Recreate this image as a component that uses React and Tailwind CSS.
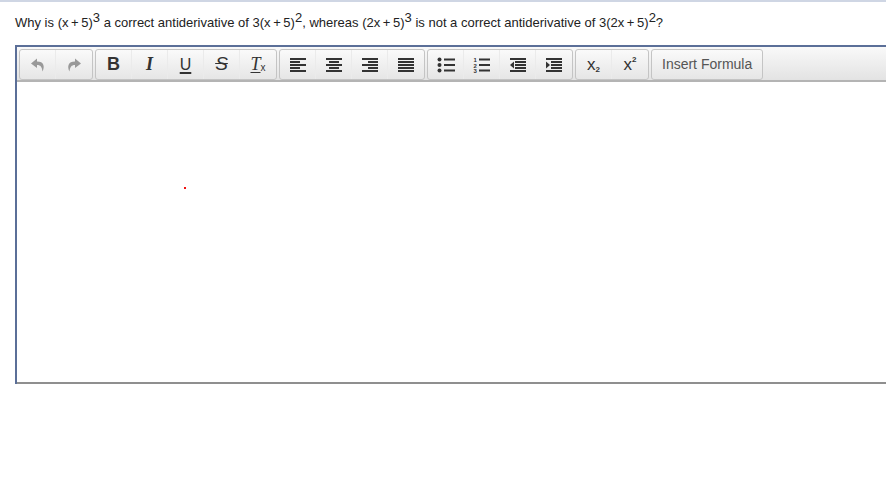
const lines = (rows) => (
    <svg width="18" height="16" viewBox="0 0 18 16" fill="#333">
        {rows.map(([x, w], i) => (
            <rect key={i} x={x} y={1 + i * 3} width={w} height="2" />
        ))}
    </svg>
);

const UndoIcon = ({ flip }) => (
    <svg width="16" height="16" viewBox="0 0 16 16" fill="#999" className={flip ? "-scale-x-100" : ""}>
        <path d="M7 1.5 L1 6.5 L7 11 L7 8 C10.5 8 12 10 12.5 14.5 C15 9.5 14 4.5 7 4.5 Z" />
    </svg>
);

const ListIcon = () => (
    <svg width="18" height="16" viewBox="0 0 18 16" fill="#333">
        <circle cx="2.5" cy="2.5" r="2" />
        <circle cx="2.5" cy="8" r="2" />
        <circle cx="2.5" cy="13.5" r="2" />
        <rect x="7" y="1.5" width="11" height="2" />
        <rect x="7" y="7" width="11" height="2" />
        <rect x="7" y="12.5" width="11" height="2" />
    </svg>
);

const NumListIcon = () => (
    <svg width="18" height="16" viewBox="0 0 18 16" fill="#333">
        <text x="0.5" y="5" fontSize="6" fontWeight="700" fontFamily="Liberation Sans">1</text>
        <text x="0.5" y="10.5" fontSize="6" fontWeight="700" fontFamily="Liberation Sans">2</text>
        <text x="0.5" y="16" fontSize="6" fontWeight="700" fontFamily="Liberation Sans">3</text>
        <rect x="6" y="1.5" width="11" height="2" />
        <rect x="6" y="7" width="11" height="2" />
        <rect x="6" y="12.5" width="11" height="2" />
    </svg>
);

const IndentIcon = ({ out }) => (
    <svg width="18" height="16" viewBox="0 0 18 16" fill="#333">
        <rect x="1" y="1" width="16" height="2" />
        <rect x="6" y="4" width="11" height="2" />
        <rect x="6" y="7" width="11" height="2" />
        <rect x="6" y="10" width="11" height="2" />
        <rect x="1" y="13" width="16" height="2" />
        <path d={out ? "M5 4.5 L1 8 L5 11.5 Z" : "M1 4.5 L5 8 L1 11.5 Z"} />
    </svg>
);

const Btn = ({ children, last }) => (
    <div className={`w-9 h-full flex items-center justify-center text-[#333] ${last ? "" : "border-r border-[#ebebeb]"}`}>
        {children}
    </div>
);

const Group = ({ children }) => (
    <div className="flex h-[31px] rounded-[3px] border border-[#c4c4c4] bg-gradient-to-b from-[#fafafa] to-[#e6e6e6]">
        {children}
    </div>
);

// thin spaces around the plus, as the formula renderer sets them
const Expr = ({ inner, sup }) => (
    <span className="whitespace-pre">
        {inner}
        <sup className="text-[13px] leading-none top-[-5px]">{sup}</sup>
    </span>
);

export default function App() {
    return (
        <div className="w-[886px] h-[498px] overflow-hidden bg-white border-t-2 border-[#cfd6e4] font-['Liberation_Sans',Arial,sans-serif]">
            <p className="ml-[15px] mt-[12px] h-[17px] leading-[17px] text-[13px] text-[#222] whitespace-pre">
                Why is <Expr inner={"(x\u2009+\u20095)"} sup="3" /> a correct antiderivative of <Expr inner={"3(x\u2009+\u20095)"} sup="2" />, whereas <Expr inner={"(2x\u2009+\u20095)"} sup="3" /> is not a correct antiderivative of <Expr inner={"3(2x\u2009+\u20095)"} sup="2" />?
            </p>

            <div className="ml-[15px] mt-[14px] border-l-2 border-t-2 border-[#5b6f98]">
                <div className="flex gap-[2px] h-[35px] pl-[2px] pt-[2px] bg-gradient-to-b from-[#f9f9f9] to-[#e3e3e3] border-b-2 border-[#b4b4b4]">
                    <Group>
                        <Btn><UndoIcon /></Btn>
                        <Btn last><UndoIcon flip /></Btn>
                    </Group>
                    <Group>
                        <Btn><span className="text-[18px] font-bold">B</span></Btn>
                        <Btn><span className="text-[18px] italic font-bold font-['Liberation_Serif',serif]">I</span></Btn>
                        <Btn><span className="text-[16px] underline underline-offset-2 decoration-2">U</span></Btn>
                        <Btn><span className="text-[19px] italic line-through">S</span></Btn>
                        <Btn last>
                            <span className="text-[18px] italic underline underline-offset-2 font-['Liberation_Serif',serif]">T</span>
                            <span className="text-[10px] mt-[6px]">x</span>
                        </Btn>
                    </Group>
                    <Group>
                        <Btn>{lines([[1, 16], [1, 10], [1, 16], [1, 10], [1, 16]])}</Btn>
                        <Btn>{lines([[1, 16], [4, 10], [1, 16], [4, 10], [1, 16]])}</Btn>
                        <Btn>{lines([[1, 16], [7, 10], [1, 16], [7, 10], [1, 16]])}</Btn>
                        <Btn last>{lines([[1, 16], [1, 16], [1, 16], [1, 16], [1, 16]])}</Btn>
                    </Group>
                    <Group>
                        <Btn><ListIcon /></Btn>
                        <Btn><NumListIcon /></Btn>
                        <Btn><IndentIcon out /></Btn>
                        <Btn last><IndentIcon /></Btn>
                    </Group>
                    <Group>
                        <Btn>
                            <span className="text-[17px] leading-none">x</span>
                            <span className="text-[8px] font-bold mt-[11px]">2</span>
                        </Btn>
                        <Btn last>
                            <span className="text-[17px] leading-none">x</span>
                            <span className="text-[8px] font-bold mb-[9px]">2</span>
                        </Btn>
                    </Group>
                    <Group>
                        <div className="px-[10px] flex items-center text-[14px] text-[#555]">Insert Formula</div>
                    </Group>
                </div>
                <div className="relative h-[302px] bg-white border-b-2 border-[#8f8f8f]">
                    <div className="absolute left-[167px] top-[105px] w-[2px] h-[2px] bg-[#f01010]"></div>
                </div>
            </div>
        </div>
    );
}
